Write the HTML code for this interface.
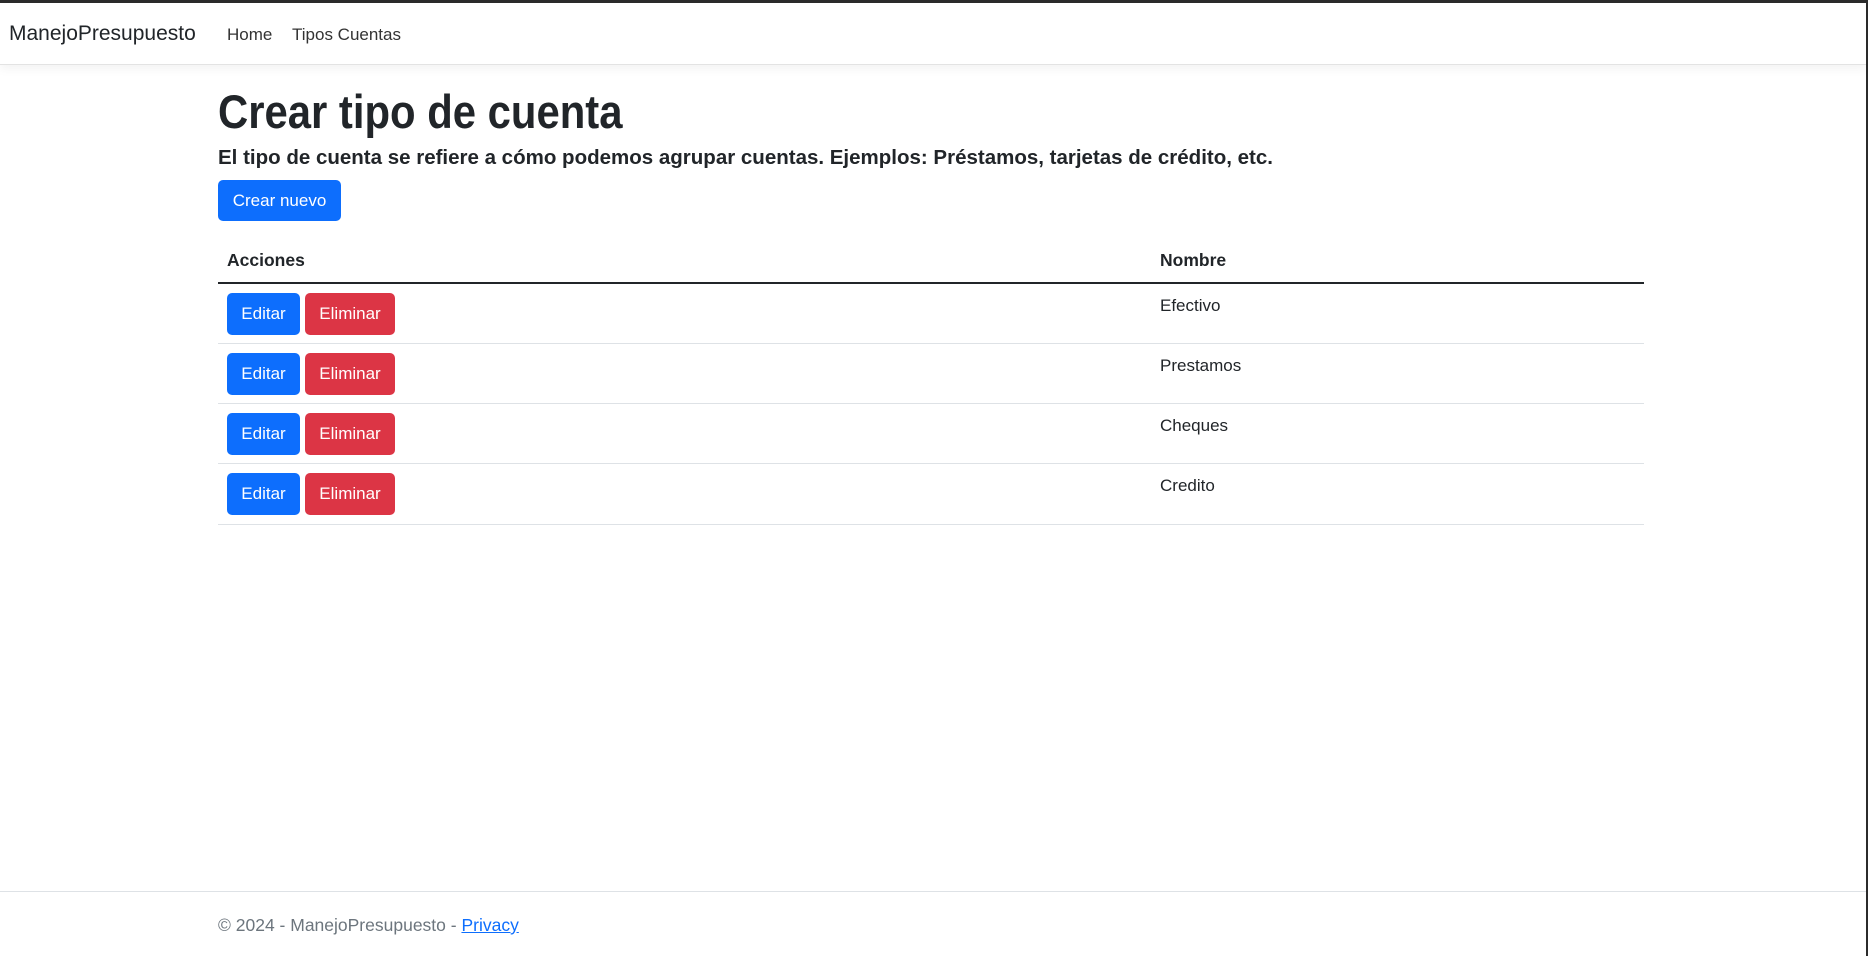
<!DOCTYPE html>
<html><head><meta charset="utf-8"><style>
*{box-sizing:border-box;margin:0;padding:0}
html,body{width:1868px;height:956px;overflow:hidden;background:#fff;font-family:"Liberation Sans",sans-serif;color:#212529}
.top{position:absolute;left:0;top:0;width:1868px;height:3px;background:#2b2b2b}
.rb{position:absolute;right:0;top:0;width:2px;height:956px;background:#2b2b2b}
nav{position:absolute;left:0;top:3px;width:1866px;height:62px;border-bottom:1px solid #e3e3e3;box-shadow:0 4px 10px rgba(0,0,0,.05);border-top-right-radius:8px}
.brand{position:absolute;left:9px;top:19px;font-size:21px;color:#212529}
.nl{position:absolute;top:22px;font-size:17px;color:#333}
h1{position:absolute;left:218px;top:84px;font-size:47px;font-weight:bold;transform:scaleX(0.89);transform-origin:left top;white-space:nowrap}
h5{position:absolute;left:218px;top:146px;font-size:20.5px;font-weight:bold;white-space:nowrap}
.btn{position:absolute;border-radius:5px;color:#fff;font-size:17px;display:flex;align-items:center;justify-content:center}
.blue{background:#0d6efd}.red{background:#dc3545}
.th{position:absolute;top:250px;font-size:17.5px;font-weight:bold}
.line{position:absolute;left:218px;width:1426px;height:1px;background:#dee2e6}
.td{position:absolute;left:1160px;font-size:17px}
.foot{position:absolute;left:0;top:891px;width:1866px;height:1px;background:#dee2e6}
.ft{position:absolute;left:218px;top:915px;font-size:17.5px;color:#6c757d}
.ft a{color:#0d6efd;text-decoration:underline}
</style></head><body>
<div class="top"></div><div class="rb"></div>
<nav><span class="brand">ManejoPresupuesto</span><span class="nl" style="left:227px">Home</span><span class="nl" style="left:292px">Tipos Cuentas</span></nav>
<h1>Crear tipo de cuenta</h1>
<h5>El tipo de cuenta se refiere a cómo podemos agrupar cuentas. Ejemplos: Préstamos, tarjetas de crédito, etc.</h5>
<div class="btn blue" style="left:218px;top:180px;width:123px;height:41px">Crear nuevo</div>
<div class="th" style="left:227px">Acciones</div>
<div class="th" style="left:1160px">Nombre</div>
<div class="line" style="top:282px;height:2px;background:#212529"></div>

<div class="btn blue" style="left:227px;top:293px;width:73px;height:42px">Editar</div>
<div class="btn red" style="left:305px;top:293px;width:90px;height:42px">Eliminar</div>
<div class="td" style="top:296px">Efectivo</div>
<div class="line" style="top:343px"></div>

<div class="btn blue" style="left:227px;top:353px;width:73px;height:42px">Editar</div>
<div class="btn red" style="left:305px;top:353px;width:90px;height:42px">Eliminar</div>
<div class="td" style="top:356px">Prestamos</div>
<div class="line" style="top:403px"></div>

<div class="btn blue" style="left:227px;top:413px;width:73px;height:42px">Editar</div>
<div class="btn red" style="left:305px;top:413px;width:90px;height:42px">Eliminar</div>
<div class="td" style="top:416px">Cheques</div>
<div class="line" style="top:463px"></div>

<div class="btn blue" style="left:227px;top:473px;width:73px;height:42px">Editar</div>
<div class="btn red" style="left:305px;top:473px;width:90px;height:42px">Eliminar</div>
<div class="td" style="top:476px">Credito</div>
<div class="line" style="top:524px"></div>

<div class="foot"></div>
<div class="ft">© 2024 - ManejoPresupuesto - <a>Privacy</a></div>
</body></html>
